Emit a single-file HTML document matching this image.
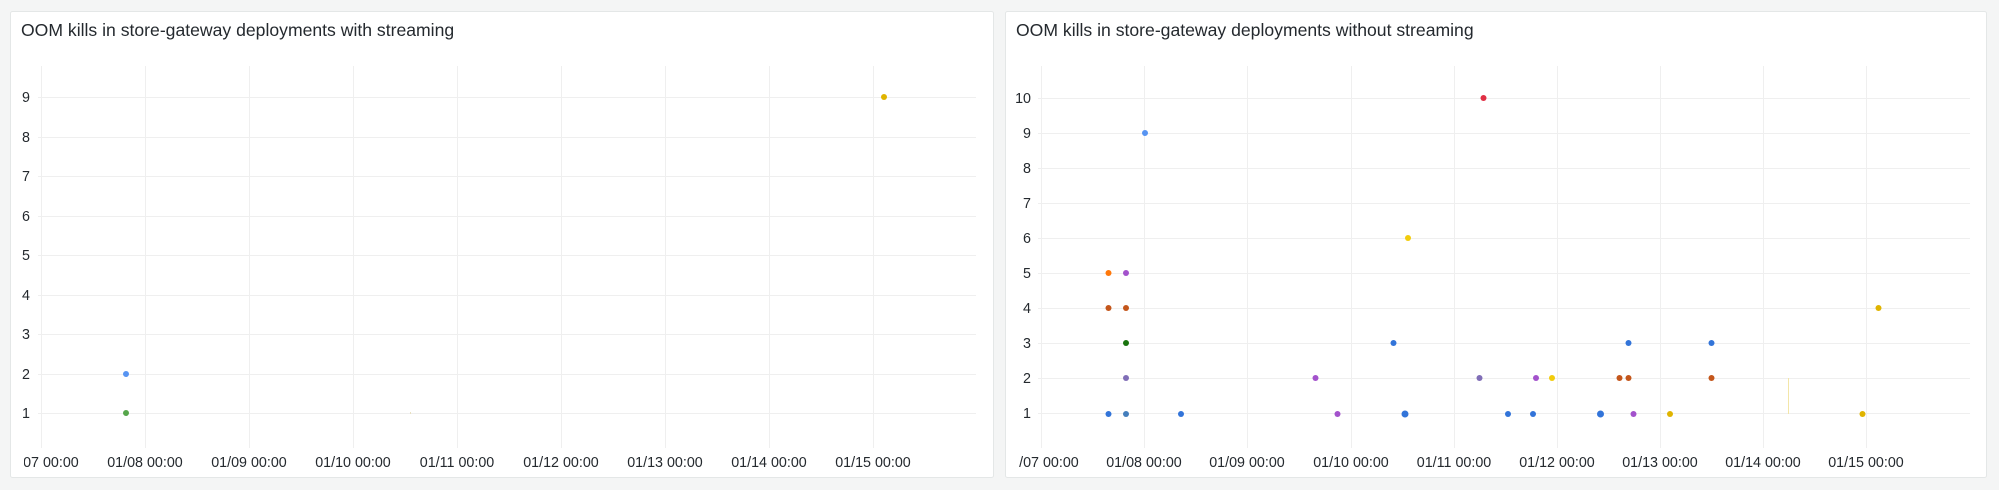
<!DOCTYPE html>
<html><head><meta charset="utf-8"><style>
html,body{margin:0;padding:0;background:#f4f5f5;width:1999px;height:490px;overflow:hidden}
svg{position:absolute;left:0;top:0}
text{font-family:"Liberation Sans",sans-serif;fill:#24292e}
.t{font-size:17.6px}
.l{font-size:14.3px}
.g{stroke:#efefef;stroke-width:1}
</style></head><body>
<svg width="1999" height="490" viewBox="0 0 1999 490">
<defs>
<clipPath id="c1"><rect x="24" y="0" width="966" height="490"/></clipPath>
<clipPath id="c2"><rect x="1019" y="0" width="967" height="490"/></clipPath>
</defs>
<rect x="10.5" y="11.5" width="983" height="466" rx="2" fill="#fff" stroke="#e4e7e7"/>
<rect x="1005.5" y="11.5" width="981" height="466" rx="2" fill="#fff" stroke="#e4e7e7"/>
<text class="t" x="21" y="36">OOM kills in store-gateway deployments with streaming</text>
<text class="t" x="1016" y="36">OOM kills in store-gateway deployments without streaming</text>

<g class="g">
<line x1="41.5" y1="66" x2="41.5" y2="448"/><line x1="145.5" y1="66" x2="145.5" y2="448"/><line x1="249.5" y1="66" x2="249.5" y2="448"/><line x1="353.5" y1="66" x2="353.5" y2="448"/><line x1="457.5" y1="66" x2="457.5" y2="448"/><line x1="561.5" y1="66" x2="561.5" y2="448"/><line x1="665.5" y1="66" x2="665.5" y2="448"/><line x1="769.5" y1="66" x2="769.5" y2="448"/><line x1="873.5" y1="66" x2="873.5" y2="448"/>
<line x1="38" y1="97.5" x2="976" y2="97.5"/><line x1="38" y1="137.5" x2="976" y2="137.5"/><line x1="38" y1="176.5" x2="976" y2="176.5"/><line x1="38" y1="216.5" x2="976" y2="216.5"/><line x1="38" y1="255.5" x2="976" y2="255.5"/><line x1="38" y1="295.5" x2="976" y2="295.5"/><line x1="38" y1="334.5" x2="976" y2="334.5"/><line x1="38" y1="374.5" x2="976" y2="374.5"/><line x1="38" y1="413.5" x2="976" y2="413.5"/>
</g>
<g class="l" text-anchor="end">
<text x="30" y="102">9</text><text x="30" y="142">8</text><text x="30" y="181">7</text><text x="30" y="221">6</text><text x="30" y="260">5</text><text x="30" y="300">4</text><text x="30" y="339">3</text><text x="30" y="379">2</text><text x="30" y="418">1</text>
</g>
<g class="l" text-anchor="middle" clip-path="url(#c1)">
<text x="41" y="467">01/07 00:00</text><text x="145" y="467">01/08 00:00</text><text x="249" y="467">01/09 00:00</text><text x="353" y="467">01/10 00:00</text><text x="457" y="467">01/11 00:00</text><text x="561" y="467">01/12 00:00</text><text x="665" y="467">01/13 00:00</text><text x="769" y="467">01/14 00:00</text><text x="873" y="467">01/15 00:00</text>
</g>
<circle cx="126" cy="374" r="3" fill="#5794f2"/>
<circle cx="126" cy="413" r="3" fill="#56a64b"/>
<circle cx="884" cy="97" r="3" fill="#e0b400"/>
<rect x="410" y="412" width="1" height="2" fill="#e8e0c0"/>

<g class="g">
<line x1="1041.5" y1="66" x2="1041.5" y2="448"/><line x1="1144.5" y1="66" x2="1144.5" y2="448"/><line x1="1247.5" y1="66" x2="1247.5" y2="448"/><line x1="1351.5" y1="66" x2="1351.5" y2="448"/><line x1="1454.5" y1="66" x2="1454.5" y2="448"/><line x1="1557.5" y1="66" x2="1557.5" y2="448"/><line x1="1660.5" y1="66" x2="1660.5" y2="448"/><line x1="1763.5" y1="66" x2="1763.5" y2="448"/><line x1="1866.5" y1="66" x2="1866.5" y2="448"/>
<line x1="1038" y1="98.5" x2="1970" y2="98.5"/><line x1="1038" y1="133.5" x2="1970" y2="133.5"/><line x1="1038" y1="168.5" x2="1970" y2="168.5"/><line x1="1038" y1="203.5" x2="1970" y2="203.5"/><line x1="1038" y1="238.5" x2="1970" y2="238.5"/><line x1="1038" y1="273.5" x2="1970" y2="273.5"/><line x1="1038" y1="308.5" x2="1970" y2="308.5"/><line x1="1038" y1="343.5" x2="1970" y2="343.5"/><line x1="1038" y1="378.5" x2="1970" y2="378.5"/><line x1="1038" y1="413.5" x2="1970" y2="413.5"/>
</g>
<g class="l" text-anchor="end">
<text x="1031" y="103">10</text><text x="1031" y="138">9</text><text x="1031" y="173">8</text><text x="1031" y="208">7</text><text x="1031" y="243">6</text><text x="1031" y="278">5</text><text x="1031" y="313">4</text><text x="1031" y="348">3</text><text x="1031" y="383">2</text><text x="1031" y="418">1</text>
</g>
<g class="l" text-anchor="middle" clip-path="url(#c2)">
<text x="1041" y="467">01/07 00:00</text><text x="1144" y="467">01/08 00:00</text><text x="1247" y="467">01/09 00:00</text><text x="1351" y="467">01/10 00:00</text><text x="1454" y="467">01/11 00:00</text><text x="1557" y="467">01/12 00:00</text><text x="1660" y="467">01/13 00:00</text><text x="1763" y="467">01/14 00:00</text><text x="1866" y="467">01/15 00:00</text>
</g>
<rect x="1788" y="378" width="1" height="36" fill="#f3e6a8"/>
<g>
<circle cx="1108.5" cy="273" r="3" fill="#ff780a"/>
<circle cx="1126" cy="273" r="3" fill="#a352cc"/>
<circle cx="1108.5" cy="308" r="3" fill="#c4561b"/>
<circle cx="1126" cy="308" r="3" fill="#c4561b"/>
<circle cx="1126" cy="343" r="3" fill="#19730e"/>
<circle cx="1126" cy="378" r="3" fill="#806eb7"/>
<circle cx="1108.5" cy="414" r="3" fill="#3274d9"/>
<circle cx="1126" cy="414" r="3" fill="#447ebc"/>
<circle cx="1181" cy="414" r="3" fill="#3274d9"/>
<circle cx="1145" cy="133" r="3" fill="#5794f2"/>
<circle cx="1483.5" cy="98" r="3" fill="#e02f44"/>
<circle cx="1408" cy="238" r="3" fill="#f2cc0c"/>
<circle cx="1393.5" cy="343" r="3" fill="#3274d9"/>
<circle cx="1315.5" cy="378" r="3" fill="#a352cc"/>
<circle cx="1337.5" cy="414" r="3" fill="#a352cc"/>
<circle cx="1405" cy="414" r="3.5" fill="#3274d9"/>
<circle cx="1479.5" cy="378" r="3" fill="#806eb7"/>
<circle cx="1536" cy="378" r="3" fill="#a352cc"/>
<circle cx="1552" cy="378" r="3" fill="#f2cc0c"/>
<circle cx="1508" cy="414" r="3" fill="#3274d9"/>
<circle cx="1533" cy="414" r="3" fill="#3274d9"/>
<circle cx="1600.5" cy="414" r="3.5" fill="#3274d9"/>
<circle cx="1633.5" cy="414" r="3" fill="#a352cc"/>
<circle cx="1619.5" cy="378" r="3" fill="#c4561b"/>
<circle cx="1628.5" cy="378" r="3" fill="#c4561b"/>
<circle cx="1628.5" cy="343" r="3" fill="#3274d9"/>
<circle cx="1711.5" cy="343" r="3" fill="#3274d9"/>
<circle cx="1711.5" cy="378" r="3" fill="#c4561b"/>
<circle cx="1670" cy="414" r="3" fill="#e0b400"/>
<circle cx="1862.5" cy="414" r="3" fill="#e0b400"/>
<circle cx="1878.5" cy="308" r="3" fill="#e0b400"/>
</g>
</svg>
</body></html>
